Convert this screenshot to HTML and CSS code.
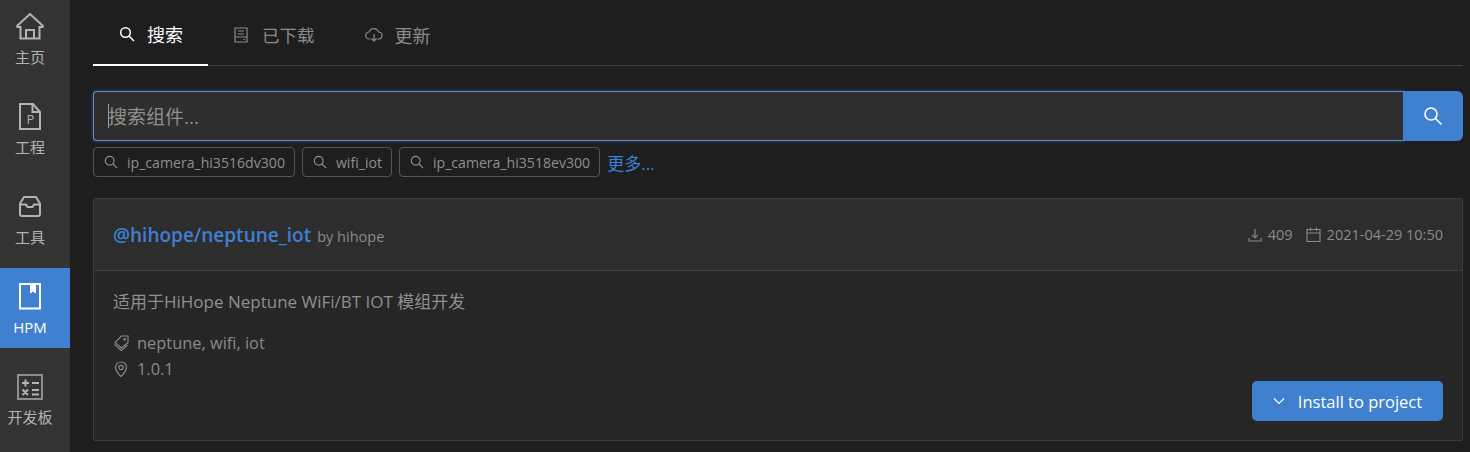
FILE: index.html
```html
<!DOCTYPE html>
<html lang="zh-CN">
<head>
<meta charset="utf-8">
<title>HPM</title>
<link rel="stylesheet" href="styles.css">
</head>
<body>
<div class="app">
  <nav class="side">
    <a class="side-item">
      <svg class="side-icon" width="30" height="30" viewBox="0 0 30 30" fill="none" stroke="currentColor" stroke-width="2"><path d="M1.500 13.500 15 1l13.500 12.500"/><path d="M1.500 14H5.500V25.500H24.500V14H28.500"/><path d="M11 25.500V17h8v8.500"/></svg>
      <span>主页</span>
    </a>
    <a class="side-item">
      <svg class="side-icon" width="30" height="30" viewBox="0 0 30 30" fill="none" stroke="currentColor" stroke-width="2"><path d="M5 1h13l7 8v17H5z"/><path d="M17.500 1v8H25"/><text x="11.500" y="21" class="p-glyph">P</text></svg>
      <span>工程</span>
    </a>
    <a class="side-item">
      <svg class="side-icon" width="30" height="30" viewBox="0 0 30 30" fill="none" stroke="currentColor" stroke-width="2"><path d="M9 4h12l4 6.500V21a2 2 0 0 1-2 2H7a2 2 0 0 1-2-2V10.500z"/><path d="M5 11.500h6l1.500 2.500h5l1.500-2.500h6"/></svg>
      <span>工具</span>
    </a>
    <a class="side-item active">
      <svg class="side-icon" width="30" height="30" viewBox="0 0 30 30" fill="none" stroke="currentColor" stroke-width="2"><path d="M5 1h20v24.500H5z"/><path d="M15.500 1h5v9l-2.500-2-2.500 2z" fill="currentColor" stroke-width="1"/></svg>
      <span>HPM</span>
    </a>
    <a class="side-item calc">
      <svg class="side-icon" width="30" height="30" viewBox="0 0 30 30" fill="none" stroke="#8e8e8e" stroke-width="2"><path d="M3 2h24v24H3z"/><path d="M7 10h7M10.500 6.500v7M17 10h7M7.500 16.500l5.500 5.500M13 16.500 7.500 22M17 17h7M17 21.500h7" stroke="#b3b3b3"/></svg>
      <span>开发板</span>
    </a>
  </nav>
  <main class="main">
    <div class="tabs">
      <div class="tab active">
        <svg class="tab-icon" width="16" height="16" viewBox="0 0 16 16" fill="none" stroke="currentColor" stroke-width="1.500"><circle cx="6.500" cy="6.500" r="4.800"/><path d="m10 10 5 5"/></svg>
        <span>搜索</span>
      </div>
      <div class="tab">
        <svg class="tab-icon" width="16" height="16" viewBox="0 0 16 16" fill="none" stroke="currentColor" stroke-width="1.200"><path d="M2 1h12v14H2z"/><path d="M5 4h6M5 7h6M2 10h12M10.500 12.500h1.500"/></svg>
        <span>已下载</span>
      </div>
      <div class="tab">
        <svg class="tab-icon wide" width="18" height="16" viewBox="0 0 18 16" fill="none" stroke="currentColor" stroke-width="1.200"><path d="M5.500 12H4.500a3.500 3.500 0 0 1-.5-7 5 5 0 0 1 9.500 0 3.500 3.500 0 0 1 0 7h-1"/><path d="M9 7v7M6.500 11.500 9 14l2.500-2.500"/></svg>
        <span>更新</span>
      </div>
    </div>

    <div class="search">
      <div class="search-input"><span class="caret"></span><span>搜索组件...</span></div>
      <button class="search-btn">
        <svg width="20" height="20" viewBox="0 0 20 20" fill="none" stroke="currentColor" stroke-width="1.600"><circle cx="8" cy="8" r="6"/><path d="m12.500 12.500 6 6"/></svg>
      </button>
    </div>

    <div class="chips">
      <span class="chip"><svg width="14" height="14" viewBox="0 0 16 16" fill="none" stroke="currentColor" stroke-width="1.300"><circle cx="6.500" cy="6.500" r="5"/><path d="m10 10 5 5"/></svg>ip_camera_hi3516dv300</span>
      <span class="chip"><svg width="14" height="14" viewBox="0 0 16 16" fill="none" stroke="currentColor" stroke-width="1.300"><circle cx="6.500" cy="6.500" r="5"/><path d="m10 10 5 5"/></svg>wifi_iot</span>
      <span class="chip"><svg width="14" height="14" viewBox="0 0 16 16" fill="none" stroke="currentColor" stroke-width="1.300"><circle cx="6.500" cy="6.500" r="5"/><path d="m10 10 5 5"/></svg>ip_camera_hi3518ev300</span>
      <a class="more">更多...</a>
    </div>

    <section class="card">
      <header class="card-head">
        <div class="title"><strong>@hihope/neptune_iot</strong><span class="by">by hihope</span></div>
        <div class="stats">
          <svg width="14" height="14" viewBox="0 0 14 14" fill="none" stroke="currentColor" stroke-width="1.100"><path d="M7 1v8.500M4 6.800l3 3 3-3M1 10v3h12v-3"/></svg>
          <span class="count">409</span>
          <svg width="15" height="15" viewBox="0 0 15 15" fill="none" stroke="currentColor" stroke-width="1.100"><path d="M1 2.500h13v12H1zM1 6h13M4.500 0.500v3.500M10.500 0.500v3.500"/></svg>
          <span>2021-04-29 10:50</span>
        </div>
      </header>
      <div class="card-body">
        <p class="desc">适用于HiHope Neptune WiFi/BT IOT 模组开发</p>
        <div class="meta">
          <svg width="16" height="16" viewBox="0 0 16 16" fill="none" stroke="currentColor" stroke-width="1.100"><path d="M8.500 1H15v6.500L8.500 13 2 7.500z"/><path d="M1.500 9.500 8.500 15.500 14.500 10"/><circle cx="11.700" cy="4.300" r=".8"/></svg>
          <span>neptune, wifi, iot</span>
        </div>
        <div class="meta">
          <svg width="16" height="16" viewBox="0 0 16 16" fill="none" stroke="currentColor" stroke-width="1.200"><path d="M8 15.500C5 12.500 2.500 9.800 2.500 6.500a5.500 5.500 0 0 1 11 0c0 3.300-2.500 6-5.500 9z"/><circle cx="8" cy="6.500" r="2.200"/></svg>
          <span>1.0.1</span>
        </div>
        <div class="actions">
          <button class="install">
            <svg width="12" height="12" viewBox="0 0 12 12" fill="none" stroke="currentColor" stroke-width="1.100"><path d="m1 3.500 5 5 5-5"/></svg>
            <span>Install to project</span>
          </button>
        </div>
      </div>
    </section>
  </main>
</div>
</body>
</html>
```

FILE: styles.css
```css
* { box-sizing: border-box; }
html, body { margin: 0; height: 100%; }
body {
  background: #1e1e1e;
  color: #8f8f8f;
  font-family: "Open Sans", "Noto Sans CJK SC", sans-serif;
  overflow: hidden;
}
.app { display: flex; height: 452px; }

.side {
  width: 70px;
  flex: none;
  background: #333333;
  display: flex;
  flex-direction: column;
  gap: 10px;
  margin-top: -2px;
  height: 454px;
}
.side-item {
  height: 80px;
  display: flex;
  flex-direction: column;
  align-items: center;
  padding: 15px 10px 0 0;
  color: #b3b3b3;
  font-size: 15px;
  line-height: 20px;
  white-space: nowrap;
}
.side-icon { display: block; margin-bottom: 4px; }
.side-item.active { background: #4080d0; color: #fff; }
.p-glyph { font-size: 13px; stroke: none; fill: currentColor; font-family: "Open Sans", sans-serif; }

.main { flex: 1; padding: 0 7px 0 23px; min-width: 0; }

.tabs {
  display: flex;
  height: 66px;
  border-bottom: 1px solid #404040;
}
.tab {
  display: flex;
  align-items: center;
  gap: 13px;
  padding: 3px 26px 0 25px;
  font-size: 17.500px;
  height: 66px;
  color: #8a8a8a;
}
.tab.active {
  color: #fff;
  font-size: 18px;
  border-bottom: 2px solid #fff;
  padding: 3px 25px 0 26px;
  gap: 12px;
  width: 115px;
}
.tab:last-child { padding-left: 24px; gap: 12px; font-size: 18px; }
.tab-icon { flex: none; }

.search {
  display: flex;
  margin-top: 25px;
  height: 50px;
}
.search-input {
  flex: 1;
  display: flex;
  align-items: center;
  background: #2e2e2e;
  border: 1px solid #5a90d0;
  border-right: 0;
  border-radius: 4px 0 0 4px;
  box-shadow: 0 0 0 2px rgba(64, 128, 208, .15);
  padding-left: 14px;
  font-size: 19px;
  color: #8f8f8f;
}
.caret { width: 1px; height: 24px; background: #9a9a9a; margin-right: -1px; }
.search-btn {
  width: 60px;
  border: 0;
  background: #4080d0;
  color: #fff;
  border-radius: 0 6px 6px 0;
  padding: 0;
  display: flex;
  align-items: center;
  justify-content: center;
  position: relative;
}

.chips {
  display: flex;
  align-items: center;
  gap: 7px;
  margin-top: 6px;
  height: 30px;
}
.chip {
  display: flex;
  align-items: center;
  gap: 9px;
  height: 30px;
  padding: 0 9px 0 10px;
  border: 1px solid #555;
  border-radius: 4px;
  font-size: 14.100px;
  color: #8f8f8f;
}
.more { font-size: 17px; color: #3f7fd4; }

.card {
  margin-top: 21px;
  height: 243px;
  border: 1px solid #3c3c3c;
  border-radius: 2px;
  background: #262626;
  display: flex;
  flex-direction: column;
}
.card-head {
  height: 72px;
  flex: none;
  background: #2d2d2d;
  border-bottom: 1px solid #404040;
  display: flex;
  align-items: center;
  justify-content: space-between;
  padding: 0 19px;
}
.title { display: flex; align-items: baseline; gap: 6px; }
.title strong { font-size: 19px; font-weight: 600; color: #3f7fd4; }
.by { font-size: 14.500px; color: #8a8a8a; }
.stats { display: flex; align-items: center; font-size: 14.500px; color: #8a8a8a; gap: 6px; }
.count { margin-right: 7px; }

.card-body {
  flex: 1;
  padding: 20px 19px 19px;
  display: flex;
  flex-direction: column;
  min-height: 0;
}
.desc { margin: 0 0 17px; font-size: 17px; line-height: 22px; color: #8f8f8f; }
.meta {
  display: flex;
  align-items: center;
  gap: 8px;
  font-size: 16.400px;
  line-height: 26px;
  color: #8a8a8a;
}
.actions { margin-top: -1px; display: flex; justify-content: flex-end; }
.install {
  width: 191px;
  height: 40px;
  background: #4080d0;
  color: #fff;
  border: 0;
  border-radius: 5px;
  display: flex;
  align-items: center;
  justify-content: center;
  gap: 13px;
  font: inherit;
  font-size: 16.500px;
  padding: 0;
}
```
